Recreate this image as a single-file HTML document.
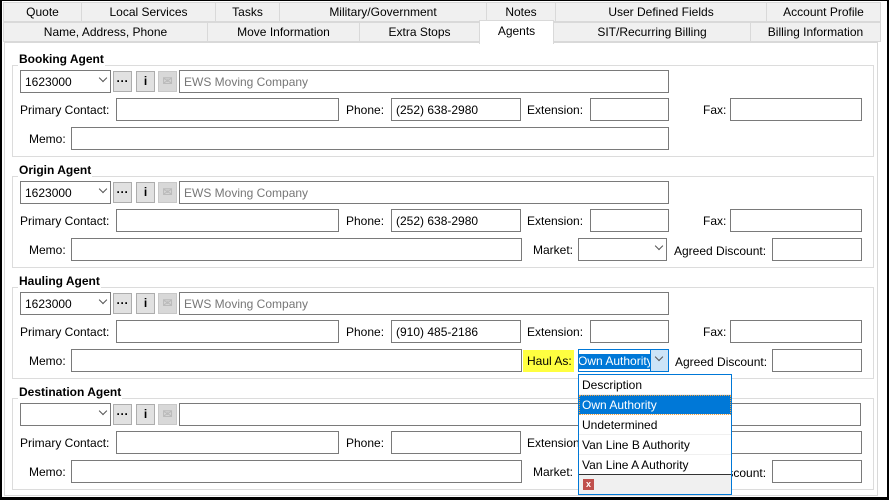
<!DOCTYPE html>
<html><head><meta charset="utf-8"><style>
*{box-sizing:border-box;margin:0;padding:0}
body{width:889px;height:500px;background:#fff;font-family:"Liberation Sans",sans-serif;font-size:12px;color:#000;position:relative;overflow:hidden;white-space:nowrap}
.a{position:absolute}
.frame{left:0;top:0;width:889px;height:500px;border-left:2px solid #000;border-right:2px solid #000;border-bottom:3px solid #000;border-top:1px solid #000}
.tab{position:absolute;height:20px;background:#f0f0f0;border:1px solid #d9d9d9;text-align:center;line-height:19px;font-size:12px}
.panel{left:4px;top:42px;width:874px;height:454px;border:1px solid #d9d9d9;background:#fff}
.grp{position:absolute;left:12px;width:862px;border:1px solid #dcdcdc;height:92px}
.gt{position:absolute;left:18px;font-weight:bold;background:#fff;padding:0 1px;font-size:12px}
.in{position:absolute;border:1px solid #7a7a7a;background:#fff;height:23px;line-height:22px;padding-left:4px;font-size:12px}
.lb{position:absolute;font-size:12px;line-height:14px}
.btn{position:absolute;width:19px;height:21px;background:#e1e1e1;border:1px solid #adadad;text-align:center;font-weight:bold;line-height:18px;font-size:12px}
.chev{position:absolute;right:4px;top:4px;width:6px;height:6px;border-right:1px solid #555;border-bottom:1px solid #555;transform:rotate(45deg)}
.dd{left:578px;top:374px;width:154px;height:121px;border:1px solid #0078d7;background:#fff}
.it{height:20px;line-height:20px;padding-left:3px;font-size:12px;border-bottom:1px solid #f0f0f0}
.g{position:absolute;left:0;width:889px;height:150px}
</style></head><body>
<div class="a frame"></div>
<div class="tab" style="left:3px;top:2px;width:79px">Quote</div>
<div class="tab" style="left:81px;top:2px;width:135px">Local Services</div>
<div class="tab" style="left:215px;top:2px;width:65px">Tasks</div>
<div class="tab" style="left:279px;top:2px;width:208px">Military/Government</div>
<div class="tab" style="left:486px;top:2px;width:70px">Notes</div>
<div class="tab" style="left:555px;top:2px;width:212px">User Defined Fields</div>
<div class="tab" style="left:766px;top:2px;width:115px">Account Profile</div>
<div class="tab" style="left:3px;top:22px;width:205px">Name, Address, Phone</div>
<div class="tab" style="left:207px;top:22px;width:153px">Move Information</div>
<div class="tab" style="left:359px;top:22px;width:121px">Extra Stops</div>
<div class="tab" style="left:553px;top:22px;width:198px">SIT/Recurring Billing</div>
<div class="tab" style="left:750px;top:22px;width:131px">Billing Information</div>
<div class="a panel"></div>
<div class="tab" style="left:479px;top:20px;width:75px;height:24px;background:#fff;border-bottom:none;line-height:20px">Agents</div>

<!-- Booking -->
<div class="g" style="top:0">
<div class="grp" style="top:65px"></div><div class="gt" style="top:52px">Booking Agent</div>
<div class="in" style="left:20px;top:70px;width:91px">1623000<span class="chev"></span></div>
<div class="btn" style="left:113px;top:71px">···</div><div class="btn" style="left:136px;top:71px">i</div><div class="btn" style="left:158px;top:71px;color:#bbb;background:#d8d8d8;border-color:#c8c8c8">✉</div>
<div class="in" style="left:179px;top:70px;width:490px;color:#777">EWS Moving Company</div>
<div class="lb" style="left:20px;top:103px">Primary Contact:</div><div class="in" style="left:116px;top:98px;width:223px"></div>
<div class="lb" style="left:346px;top:103px">Phone:</div><div class="in" style="left:391px;top:98px;width:130px">(252) 638-2980</div>
<div class="lb" style="left:527px;top:103px">Extension:</div><div class="in" style="left:590px;top:98px;width:79px"></div>
<div class="lb" style="left:703px;top:103px">Fax:</div><div class="in" style="left:730px;top:98px;width:132px"></div>
<div class="lb" style="left:29px;top:132px">Memo:</div><div class="in" style="left:71px;top:127px;width:598px"></div>
</div>
<!-- Origin -->
<div class="g" style="top:111px">
<div class="grp" style="top:65px"></div><div class="gt" style="top:52px">Origin Agent</div>
<div class="in" style="left:20px;top:70px;width:91px">1623000<span class="chev"></span></div>
<div class="btn" style="left:113px;top:71px">···</div><div class="btn" style="left:136px;top:71px">i</div><div class="btn" style="left:158px;top:71px;color:#bbb;background:#d8d8d8;border-color:#c8c8c8">✉</div>
<div class="in" style="left:179px;top:70px;width:490px;color:#777">EWS Moving Company</div>
<div class="lb" style="left:20px;top:103px">Primary Contact:</div><div class="in" style="left:116px;top:98px;width:223px"></div>
<div class="lb" style="left:346px;top:103px">Phone:</div><div class="in" style="left:391px;top:98px;width:130px">(252) 638-2980</div>
<div class="lb" style="left:527px;top:103px">Extension:</div><div class="in" style="left:590px;top:98px;width:79px"></div>
<div class="lb" style="left:703px;top:103px">Fax:</div><div class="in" style="left:730px;top:98px;width:132px"></div>
<div class="lb" style="left:29px;top:132px">Memo:</div><div class="in" style="left:71px;top:127px;width:451px"></div>
<div class="lb" style="left:533px;top:132px">Market:</div><div class="in" style="left:578px;top:127px;width:89px"><span class="chev"></span></div>
<div class="lb" style="left:674px;top:133px">Agreed Discount:</div><div class="in" style="left:772px;top:127px;width:90px"></div>
</div>
<!-- Hauling -->
<div class="g" style="top:222px">
<div class="grp" style="top:65px"></div><div class="gt" style="top:52px">Hauling Agent</div>
<div class="in" style="left:20px;top:70px;width:91px">1623000<span class="chev"></span></div>
<div class="btn" style="left:113px;top:71px">···</div><div class="btn" style="left:136px;top:71px">i</div><div class="btn" style="left:158px;top:71px;color:#bbb;background:#d8d8d8;border-color:#c8c8c8">✉</div>
<div class="in" style="left:179px;top:70px;width:490px;color:#777">EWS Moving Company</div>
<div class="lb" style="left:20px;top:103px">Primary Contact:</div><div class="in" style="left:116px;top:98px;width:223px"></div>
<div class="lb" style="left:346px;top:103px">Phone:</div><div class="in" style="left:391px;top:98px;width:130px">(910) 485-2186</div>
<div class="lb" style="left:527px;top:103px">Extension:</div><div class="in" style="left:590px;top:98px;width:79px"></div>
<div class="lb" style="left:703px;top:103px">Fax:</div><div class="in" style="left:730px;top:98px;width:132px"></div>
<div class="lb" style="left:29px;top:132px">Memo:</div><div class="in" style="left:71px;top:127px;width:451px"></div>
<div class="lb" style="left:523px;top:128px;width:51px;height:22px;background:#ffff40;line-height:22px;padding-left:4px">Haul As:</div>
<div class="in" style="left:578px;top:127px;width:91px;border-color:#0078d7;padding-left:1px;overflow:hidden"><span style="background:#0078d7;color:#fff;display:inline-block;line-height:15px;margin-left:-2px">Own Authority</span><span style="position:absolute;right:0;top:0;width:18px;height:21px;background:#cce4f7;border-left:1px solid #0078d7"></span><span class="chev" style="right:6px"></span></div>
<div class="lb" style="left:675px;top:133px">Agreed Discount:</div><div class="in" style="left:772px;top:127px;width:90px"></div>
</div>
<!-- Destination -->
<div class="g" style="top:333px">
<div class="grp" style="top:65px"></div><div class="gt" style="top:52px">Destination Agent</div>
<div class="in" style="left:20px;top:70px;width:91px"><span class="chev"></span></div>
<div class="btn" style="left:113px;top:71px">···</div><div class="btn" style="left:136px;top:71px">i</div><div class="btn" style="left:158px;top:71px;color:#bbb;background:#d8d8d8;border-color:#c8c8c8">✉</div>
<div class="in" style="left:179px;top:70px;width:682px"></div>
<div class="lb" style="left:20px;top:103px">Primary Contact:</div><div class="in" style="left:116px;top:98px;width:223px"></div>
<div class="lb" style="left:346px;top:103px">Phone:</div><div class="in" style="left:391px;top:98px;width:130px"></div>
<div class="lb" style="left:527px;top:103px">Extension:</div><div class="in" style="left:730px;top:98px;width:132px"></div>
<div class="lb" style="left:29px;top:132px">Memo:</div><div class="in" style="left:71px;top:127px;width:451px"></div>
<div class="lb" style="left:533px;top:132px">Market:</div>
<div class="lb" style="left:674px;top:133px">Agreed Discount:</div><div class="in" style="left:772px;top:127px;width:90px"></div>
</div>
<!-- dropdown -->
<div class="a dd">
<div class="it">Description</div>
<div class="it" style="background:#0078d7;color:#fff;outline:1px dotted #f0a040;outline-offset:-1px">Own Authority</div>
<div class="it">Undetermined</div>
<div class="it">Van Line B Authority</div>
<div class="it" style="border-bottom:1px solid #333">Van Line A Authority</div>
<div style="height:19px;background:#f0f0f0;position:relative"><span style="position:absolute;left:4px;top:4px;width:11px;height:11px;background:#c0504d;color:#fff;font-size:9px;line-height:11px;text-align:center;font-weight:bold">x</span></div>
</div>
</body></html>
